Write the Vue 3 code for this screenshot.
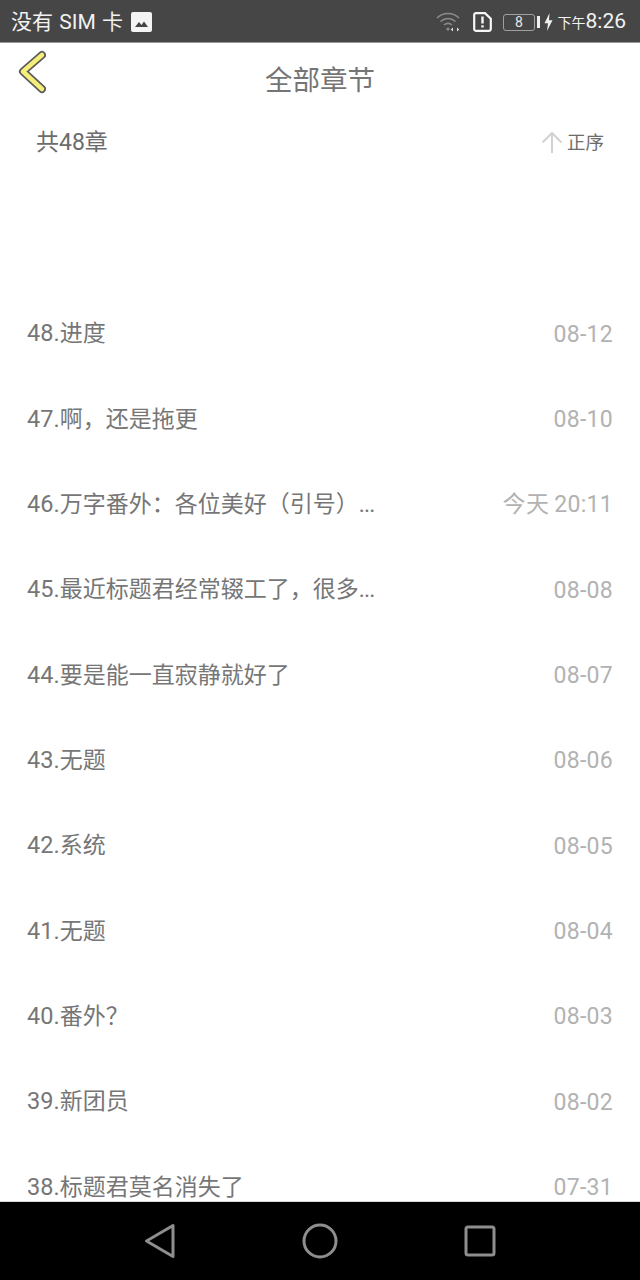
<script setup>
const rows = [
  ['48.', '进度', '', '08-12'],
  ['47.', '啊，还是拖更', '', '08-10'],
  ['46.', '万字番外：各位美好（引号）', '...', '今天 20:11'],
  ['45.', '最近标题君经常辍工了，很多', '...', '08-08'],
  ['44.', '要是能一直寂静就好了', '', '08-07'],
  ['43.', '无题', '', '08-06'],
  ['42.', '系统', '', '08-05'],
  ['41.', '无题', '', '08-04'],
  ['40.', '番外？', '', '08-03'],
  ['39.', '新团员', '', '08-02'],
  ['38.', '标题君莫名消失了', '', '07-31'],
]
</script>

<template>
  <div class="phone">
    <div class="status">
      <div class="st-left">
        <span class="carrier">没有 SIM 卡</span>
        <svg class="pic" width="21" height="20" viewBox="0 0 21 20">
          <rect x="0" y="0" width="21" height="20" rx="2" fill="#f4f4f4" />
          <path d="M4 15 L8 10 L10.5 13 L13 9.5 L17 15 Z" fill="#444" />
        </svg>
      </div>
      <div class="st-right">
        <svg width="26" height="22" viewBox="0 0 26 22" fill="none" stroke="#8c8c8c" stroke-width="1.6">
          <path d="M1 7 C7 1 17 1 23 7" />
          <path d="M4.5 10.5 C9 6.5 15 6.5 19.5 10.5" />
          <path d="M8 14 C10.5 12 13.5 12 16 14" />
          <circle cx="12" cy="18" r="1.6" fill="#8c8c8c" stroke="none" />
          <path d="M17 16.5 L14.8 18.5 L17 20.5 Z M21 16.5 L23.2 18.5 L21 20.5 Z" fill="#e4e4e4" stroke="none" />
        </svg>
        <svg class="sim" width="19" height="20" viewBox="0 0 19 20" fill="none">
          <path d="M2.8 1.2 H12 L17.8 6.8 V16.8 A2 2 0 0 1 15.8 18.8 H2.8 A1.6 1.6 0 0 1 1.2 17.2 V2.8 A1.6 1.6 0 0 1 2.8 1.2 Z" stroke="#f6f6f6" stroke-width="2.2" />
          <path d="M9.5 4.5 V11.5 M9.5 13.2 V15.6" stroke="#f6f6f6" stroke-width="2.4" />
        </svg>
        <div class="batt"><span>8</span></div>
        <i class="nub"></i>
        <svg width="9" height="18" viewBox="0 0 9 16" preserveAspectRatio="none" class="bolt"><path d="M5.5 0 L0.5 9 H4 L3 16 L8.5 6.5 H5 Z" fill="#f0f0f0" /></svg>
        <div class="clock"><small>下午</small>8:26</div>
      </div>
    </div>

    <div class="main">
      <header class="nav">
        <svg class="back" width="30" height="46" viewBox="0 0 30 46">
          <path d="M26 7 L7 23.5 L26 41" fill="none" stroke="#5c5c5c" stroke-width="8" stroke-linecap="round" stroke-linejoin="round" />
          <path d="M26 7 L7 23.5 L26 41" fill="none" stroke="#f5ee78" stroke-width="4.5" stroke-linecap="round" stroke-linejoin="round" />
        </svg>
        <h1>全部章节</h1>
      </header>
      <div class="summary">
        <span>共48章</span>
        <div class="order">
          <svg class="arrow" width="22" height="22" viewBox="0 0 22 22" fill="none" stroke="#d2d2d2" stroke-width="2">
            <path d="M1.5 11.5 L11 2 L20.5 11.5 M11 2 V22" />
          </svg>
          <span>正序</span>
        </div>
      </div>
      <ul class="list">
        <li v-for="r in rows" :key="r[0]" class="row">
          <span class="name"><span class="num">{{ r[0] }}</span>{{ r[1] }}<span class="ell">{{ r[2] }}</span></span>
          <span class="date">{{ r[3] }}</span>
        </li>
      </ul>
    </div>

    <div class="navbar">
      <svg width="32" height="36" viewBox="0 0 32 36" fill="none" stroke="#8e8e8e" stroke-width="3" stroke-linejoin="round">
        <path d="M29 2.5 V33.5 L2.5 18 Z" />
      </svg>
      <svg width="36" height="36" viewBox="0 0 36 36" fill="none" stroke="#8e8e8e" stroke-width="3">
        <circle cx="18" cy="18" r="16" />
      </svg>
      <svg width="32" height="32" viewBox="0 0 32 32" fill="none" stroke="#8e8e8e" stroke-width="3" stroke-linejoin="round">
        <rect x="2" y="2" width="28" height="28" rx="2" />
      </svg>
    </div>
  </div>
</template>

<style scoped>
.phone {
  width: 640px;
  height: 1280px;
  display: flex;
  flex-direction: column;
  overflow: hidden;
  background: #fff;
  font-family: Roboto, "Noto Sans CJK SC", sans-serif;
}
.status {
  height: 40px;
  flex: none;
  background: #464646;
  border-bottom: 1px solid #9a9a9a;
  box-sizing: content-box;
  display: flex;
  align-items: center;
  justify-content: space-between;
  padding: 2px 14px 0 11px;
  color: #f2f2f2;
}
.st-left {
  display: flex;
  align-items: center;
  gap: 8px;
  font-size: 21px;
  line-height: 26px;
}
.carrier {
  word-spacing: 1px;
}
.st-right {
  display: flex;
  align-items: center;
}
.sim { margin-left: 11px; }
.batt {
  width: 32px;
  height: 17px;
  box-sizing: border-box;
  margin-left: 11px;
  border: 1.5px solid #a0a0a0;
  border-radius: 3px;
  display: flex;
  align-items: center;
  justify-content: center;
  font-size: 14px;
  color: #e8e8e8;
}
.nub {
  width: 2.5px;
  height: 12px;
  margin-left: 2px;
  background: #f0f0f0;
}
.bolt { margin-left: 4px; }
.clock {
  margin-left: 5px;
  font-size: 21px;
  line-height: 26px;
  color: #f2f2f2;
  white-space: nowrap;
}
.clock small {
  font-size: 14px;
}
.main {
  flex: 1;
  min-height: 0;
  overflow: hidden;
  border-bottom: 1px solid #d5d5d5;
}
.nav {
  height: 75px;
  position: relative;
  display: flex;
  justify-content: center;
  padding-top: 18px;
  box-sizing: border-box;
}
.back {
  position: absolute;
  left: 16px;
  top: 5px;
}
h1 {
  margin: 0;
  font-size: 27.5px;
  font-weight: 400;
  line-height: 40px;
  color: #757575;
}
.summary {
  display: flex;
  align-items: center;
  justify-content: space-between;
  height: 50px;
  padding: 0 36px;
  color: #6c6c6c;
  font-size: 23px;
  line-height: 30px;
}
.order {
  display: flex;
  align-items: center;
  gap: 4px;
  font-size: 18.5px;
}
.arrow {
  margin-bottom: 3px;
}
.list {
  list-style: none;
  margin: 0;
  padding: 123px 27px 0;
}
.row {
  height: 85.35px;
  display: flex;
  align-items: center;
  justify-content: space-between;
  font-size: 23px;
  line-height: 30px;
  color: #767676;
}
.num {
  font-size: 23.5px;
}
.ell {
  letter-spacing: -0.7px;
}
.date {
  margin-top: 2px;
  letter-spacing: 0.3px;
  word-spacing: -1px;
  color: #b2b2b2;
}
.navbar {
  height: 78px;
  flex: none;
  background: #000;
  display: flex;
  align-items: center;
  justify-content: space-between;
  padding: 0 144px;
}
</style>
